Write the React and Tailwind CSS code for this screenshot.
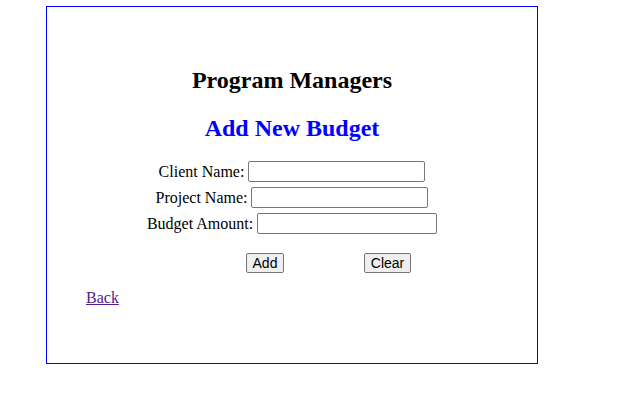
export default function App() {
  const serif = { fontFamily: '"Liberation Serif", "Times New Roman", serif' };
  return (
    <div className="min-h-[408px] w-[636px] bg-white pl-[46px] pt-[6px]" style={serif}>
      <div className="flex h-[358px] w-[492px] flex-col border border-[#0000ff] pt-[59px]">
        <h2 className="text-center text-[24px] font-bold leading-[28px] text-black">
          Program Managers
        </h2>
        <h2 className="mt-[20px] text-center text-[24px] font-bold leading-[28px] text-[#0000ff]">
          Add New Budget
        </h2>

        <div className="mt-[19px] flex flex-col items-center gap-[5px] text-[16px] text-black">
          <div className="flex h-[21px] items-center gap-[4px]">
            <span>Client Name:</span>
            <input className="h-[21px] w-[177px] rounded-[2px] border border-[#767676] bg-white" />
          </div>
          <div className="flex h-[21px] items-center gap-[4px]">
            <span>Project Name:</span>
            <input className="h-[21px] w-[177px] rounded-[2px] border border-[#767676] bg-white" />
          </div>
          <div className="flex h-[21px] items-center gap-[4px]">
            <span>Budget Amount:</span>
            <input className="h-[21px] w-[180px] rounded-[2px] border border-[#767676] bg-white" />
          </div>
        </div>

        <div
          className="mt-[19px] flex items-center pl-[199px] text-[14px]"
          style={{ fontFamily: '"Liberation Sans", Arial, sans-serif' }}
        >
          <button className="h-[20px] w-[38px] rounded-[2px] border border-[#767676] bg-[#efefef] leading-none text-black">
            Add
          </button>
          <button className="ml-[80px] h-[20px] w-[47px] rounded-[2px] border border-[#767676] bg-[#efefef] leading-none text-black">
            Clear
          </button>
        </div>

        <div className="mt-[16px] pl-[39px] text-[16px] leading-[18px]">
          <a href="#" className="text-[#551a8b] underline">
            Back
          </a>
        </div>
      </div>
    </div>
  );
}
